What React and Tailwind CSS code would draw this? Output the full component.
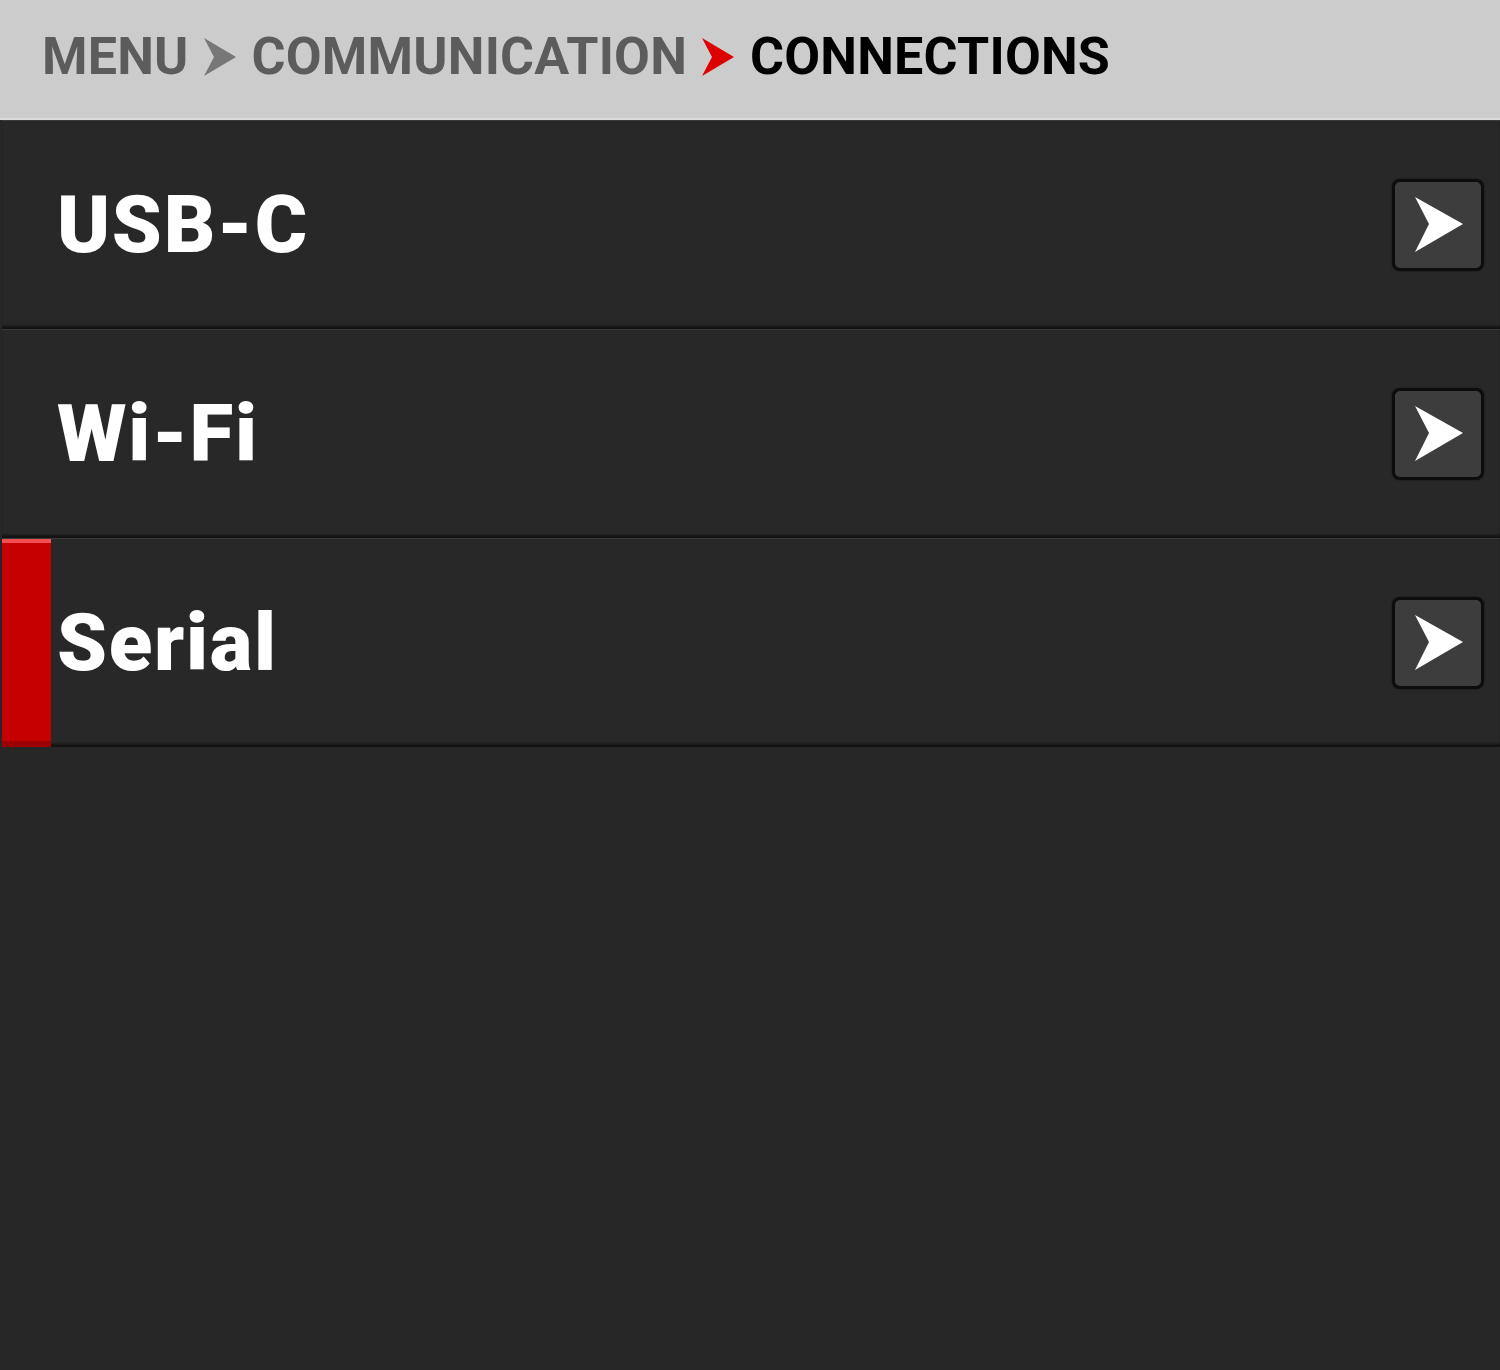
import React from 'react';

const Chevron = ({ color }) => (
  <svg width="33" height="40" viewBox="0 0 33 40" className="shrink-0">
    <path d="M0 1 L32 20 L0 39 L10 20 Z" fill={color} />
  </svg>
);

const ArrowButton = () => (
  <div className="w-[92px] h-[92px] rounded-[8px] border-[3px] border-[#0d0d0d] bg-[#3d3d3d] flex items-center justify-center shadow-[0_0_2px_rgba(0,0,0,0.6)]">
    <svg width="50" height="58" viewBox="0 0 50 58" className="ml-[2px]">
      <path d="M1 1 L49 28 L1 56 L15 28 Z" fill="#ffffff" />
    </svg>
  </div>
);

const Row = ({ label, selected }) => (
  <div className="relative h-[209px] flex items-center border-t border-[#3a3a3a] bg-[#282828] shadow-[inset_0_-4px_3px_-1px_rgba(0,0,0,0.55)]">
    {selected && (
      <div className="absolute left-0 top-0 bottom-0 w-[49px] flex flex-col">
        <div className="h-[4px] bg-[#f25050]" />
        <div className="flex-1 bg-[#c60000]" />
        <div className="h-[6px] bg-[#9c0000]" />
      </div>
    )}
    <span className="pl-[55px] text-white font-black text-[80px] leading-none tracking-[1.7px] flex-1">{label}</span>
    <div className="pr-[16px]">
      <ArrowButton />
    </div>
  </div>
);

export default function App() {
  const rows = ['USB-C', 'Wi-Fi', 'Serial'];
  return (
    <div className="w-[1500px] h-[1370px] bg-[#272727] overflow-hidden" style={{ fontFamily: 'Roboto, "Liberation Sans", sans-serif' }}>
      <div className="h-[120px] bg-[#cccccc] border-b-2 border-[#dcdcdc] flex items-center gap-[15px] pl-[42px] pb-[4px] tracking-[0.2px]">
        <span className="text-[52px] font-bold text-[#5c5c5c] leading-none">MENU</span>
        <Chevron color="#777777" />
        <span className="text-[52px] font-bold text-[#5c5c5c] leading-none">COMMUNICATION</span>
        <Chevron color="#dd0000" />
        <span className="text-[52px] font-bold text-black leading-none">CONNECTIONS</span>
      </div>
      <div className="pl-[2px]">
        {rows.map((r, i) => (
          <Row key={r} label={r} selected={i === 2} />
        ))}
      </div>
    </div>
  );
}
